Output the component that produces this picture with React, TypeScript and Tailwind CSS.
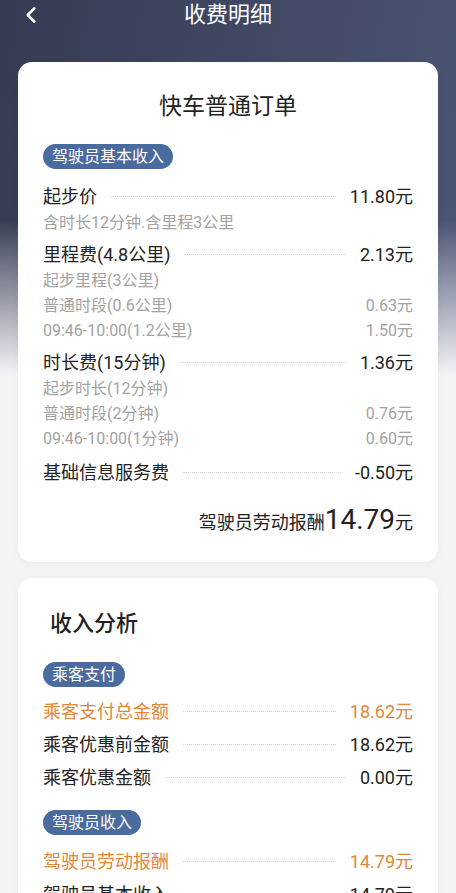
import { ChevronLeft } from 'lucide-react';

type Item = {
  label: string;
  value?: string;
  sub?: boolean;
  orange?: boolean;
  gap?: string;
};

// 快车订单 费用明细
const fareItems: Item[] = [
  { label: '起步价', value: '11.80元' },
  { label: '含时长12分钟.含里程3公里', sub: true },
  { label: '里程费(4.8公里)', value: '2.13元', gap: 'mt-[6px]' },
  { label: '起步里程(3公里)', sub: true },
  { label: '普通时段(0.6公里)', value: '0.63元', sub: true },
  { label: '09:46-10:00(1.2公里)', value: '1.50元', sub: true },
  { label: '时长费(15分钟)', value: '1.36元', gap: 'mt-[6px]' },
  { label: '起步时长(12分钟)', sub: true },
  { label: '普通时段(2分钟)', value: '0.76元', sub: true },
  { label: '09:46-10:00(1分钟)', value: '0.60元', sub: true },
  { label: '基础信息服务费', value: '-0.50元', gap: 'mt-[8px]' },
];

function Badge({ text, className = '' }: { text: string; className?: string }) {
  return (
    <div className={`inline-flex h-[25px] items-center rounded-full bg-[#4a6b9e] px-[9px] text-[16px] leading-none text-white ${className}`}>
      {text}
    </div>
  );
}

function Dots() {
  return <div className="mx-[14px] h-0 flex-1 self-center border-t border-dotted border-[#d6d6d6]" />;
}

function FareRow({ item }: { item: Item }) {
  if (item.sub) {
    return (
      <div className="flex h-[25px] items-center justify-between text-[16px] text-[#a3a3a3]">
        <span>{item.label}</span>
        {item.value && <span>{item.value}</span>}
      </div>
    );
  }
  return (
    <div className={`flex h-[27px] items-center text-[18px] text-[#222] ${item.gap ?? ''}`}>
      <span className="whitespace-nowrap">{item.label}</span>
      <Dots />
      <span className="whitespace-nowrap">{item.value}</span>
    </div>
  );
}

function AnalysisRow({ item }: { item: Item }) {
  const color = item.orange ? 'text-[#e1873b]' : 'text-[#222]';
  return (
    <div className={`flex h-[33px] items-center text-[18px] ${color}`}>
      <span className="whitespace-nowrap">{item.label}</span>
      <Dots />
      <span className="whitespace-nowrap">{item.value}</span>
    </div>
  );
}

export default function App() {
  return (
    <div className="h-[893px] overflow-hidden bg-[linear-gradient(180deg,transparent_0px,transparent_220px,#f4f4f6_375px),linear-gradient(100deg,#363b52_0%,#4f5a7c_100%)] font-[Roboto,'Noto_Sans_CJK_SC',sans-serif]">
      {/* 顶部标题栏 */}
      <div className="relative flex h-[30px] items-center justify-center">
        <button className="absolute left-[18px] top-[2px] text-white">
          <ChevronLeft className="h-[26px] w-[26px]" strokeWidth={2.4} />
        </button>
        <h1 className="text-[22px] leading-none text-white">收费明细</h1>
      </div>

      {/* 订单明细卡片 */}
      <div className="mx-[18px] mt-[32px] rounded-[14px] bg-white px-[25px] pb-[26px] pt-[29px] shadow-[0_2px_8px_rgba(0,0,0,0.04)]">
        <h2 className="text-center text-[23px] leading-[32px] text-[#222]">快车普通订单</h2>
        <Badge text="驾驶员基本收入" className="mt-[21px]" />
        <div className="mt-[14px]">
          {fareItems.map((item, i) => (
            <FareRow key={i} item={item} />
          ))}
        </div>
        <div className="mt-[20px] flex items-baseline justify-end text-[#222]">
          <span className="text-[18px]">驾驶员劳动报酬</span>
          <span className="text-[28px] leading-none">14.79</span>
          <span className="text-[18px]">元</span>
        </div>
      </div>

      {/* 收入分析卡片 */}
      <div className="mx-[18px] mt-[16px] rounded-[14px] bg-white px-[25px] pb-[20px] pt-[30px] shadow-[0_2px_8px_rgba(0,0,0,0.04)]">
        <h2 className="pl-[7px] text-[22px] font-medium leading-[32px] text-[#222]">收入分析</h2>
        <Badge text="乘客支付" className="mt-[22px]" />
        <div className="mt-[8px]">
          <AnalysisRow item={{ label: '乘客支付总金额', value: '18.62元', orange: true }} />
          <AnalysisRow item={{ label: '乘客优惠前金额', value: '18.62元' }} />
          <AnalysisRow item={{ label: '乘客优惠金额', value: '0.00元' }} />
        </div>
        <Badge text="驾驶员收入" className="mt-[16px]" />
        <div className="mt-[10px]">
          <AnalysisRow item={{ label: '驾驶员劳动报酬', value: '14.79元', orange: true }} />
          <AnalysisRow item={{ label: '驾驶员基本收入', value: '14.79元' }} />
        </div>
      </div>
    </div>
  );
}
